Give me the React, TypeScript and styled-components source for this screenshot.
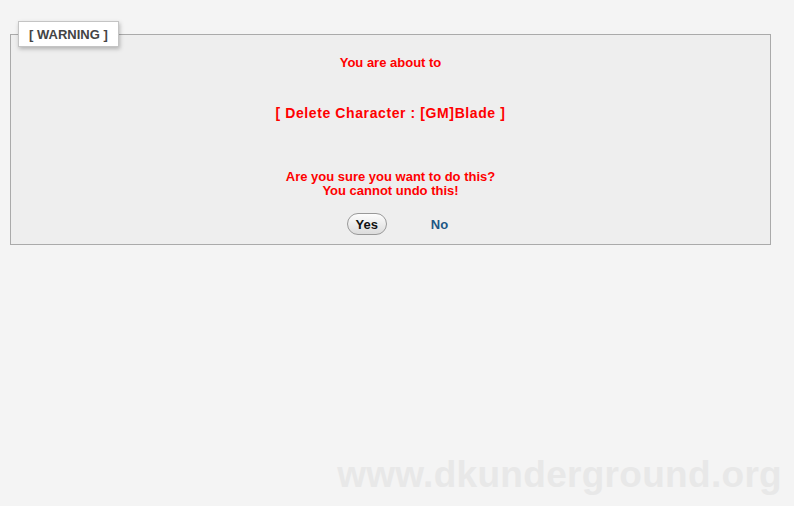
import styled, { createGlobalStyle } from "styled-components";

const GlobalStyle = createGlobalStyle`
  html, body {
    margin: 0;
    padding: 0;
    background: #f4f4f4;
    font-family: "Liberation Sans", Arial, sans-serif;
  }
`;

const Page = styled.div`
  position: relative;
  width: 794px;
  height: 506px;
  padding: 21px 24px 0 10px;
  box-sizing: border-box;
`;

const Fieldset = styled.fieldset`
  margin: 0;
  padding: 0 0 9px;
  border: 1px solid #aaa;
  background: #eeeeee;
  width: 761px;
  box-sizing: border-box;
  min-inline-size: 0;
`;

const Legend = styled.legend`
  margin-left: 7px;
  padding: 6px 10px 5px;
  background: #fff;
  border: 1px solid #c4c4c4;
  box-shadow: 1px 2px 4px rgba(0, 0, 0, 0.25);
  color: #444;
  font-size: 13px;
  font-weight: bold;
  line-height: 13px;
`;

const Body = styled.div`
  display: flex;
  flex-direction: column;
  align-items: center;
  color: #ff0000;
  font-weight: bold;
  text-align: center;
`;

const Line = styled.div<{ $size?: number; $gap?: number }>`
  font-size: ${(p) => p.$size ?? 13}px;
  line-height: 14px;
  margin-top: ${(p) => p.$gap ?? 0}px;
  letter-spacing: ${(p) => ((p.$size ?? 13) > 13 ? "0.6px" : "0")};
`;

const Actions = styled.div`
  display: flex;
  align-items: center;
  gap: 44px;
  margin-top: 15px;
  padding-left: 14px;
`;

const YesButton = styled.button`
  width: 40px;
  height: 22px;
  padding: 0;
  border: 1px solid #999;
  border-radius: 11px;
  background: linear-gradient(#fdfdfd, #dcdcdc);
  color: #111;
  font-family: "Liberation Sans", Arial, sans-serif;
  font-size: 13px;
  font-weight: bold;
  cursor: pointer;
`;

const NoLink = styled.a`
  color: #1d5785;
  font-size: 13px;
  font-weight: bold;
  text-decoration: none;
  cursor: pointer;
`;

const Watermark = styled.div`
  position: absolute;
  right: 12px;
  bottom: 10px;
  color: #e8e8e8;
  font-size: 37px;
  font-weight: bold;
  letter-spacing: 0.3px;
  user-select: none;
`;

export default function App() {
  return (
    <>
      <GlobalStyle />
      <Page>
        <Fieldset>
          <Legend>[ WARNING ]</Legend>
          <Body>
            <Line $gap={9}>You are about to</Line>
            <Line $size={14} $gap={36}>
              [ Delete Character : [GM]Blade ]
            </Line>
            <Line $gap={50}>Are you sure you want to do this?</Line>
            <Line>You cannot undo this!</Line>
            <Actions>
              <YesButton>Yes</YesButton>
              <NoLink>No</NoLink>
            </Actions>
          </Body>
        </Fieldset>
        <Watermark>www.dkunderground.org</Watermark>
      </Page>
    </>
  );
}
